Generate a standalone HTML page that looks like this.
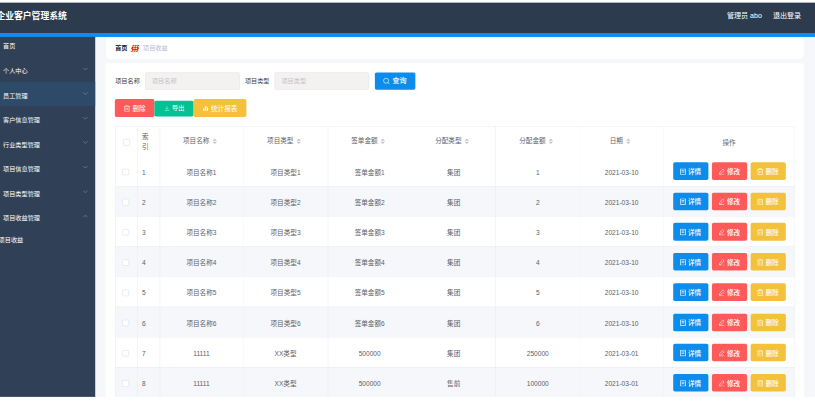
<!DOCTYPE html>
<html lang="zh-CN"><head><meta charset="utf-8"><title>企业客户管理系统</title><style>
html,body{margin:0;padding:0;background:#fff;}
body{width:815px;height:401px;overflow:hidden;position:relative;font-family:"Liberation Sans", "Noto Sans CJK SC", sans-serif;}
#w{position:absolute;left:0;top:0;width:1886.36px;height:931.82px;transform:scale(0.44);transform-origin:0 0;overflow:hidden;}
.b{position:absolute;}
.t{position:absolute;white-space:nowrap;}
.car{display:inline-block;position:relative;width:24px;height:14px;margin-left:0;vertical-align:-2px;}
.car i{position:absolute;left:7px;width:0;height:0;border:5px solid transparent;}
.car .up{top:-4px;border-bottom-color:#c0c4cc;}
.car .dn{top:8px;border-top-color:#c0c4cc;}
</style></head><body><div id="w">
<div class="b " style="left:0.00px;top:6.25px;width:1886.36px;height:68.75px;background:#2c3b4d;"></div>
<div class="b " style="left:0.00px;top:75.00px;width:1886.36px;height:9.66px;background:#0d8def;"></div>
<div class="t " style="left:-8.18px;top:23.05px;font-size:20px;line-height:28.00px;color:#fff;font-weight:700;">企业客户管理系统</div>
<div class="t " style="left:1652.27px;top:25.85px;font-size:16px;line-height:22.40px;color:#fff;font-weight:400;">管理员 abo</div>
<div class="t " style="left:1756.82px;top:25.85px;font-size:16px;line-height:22.40px;color:#fff;font-weight:400;">退出登录</div>
<div class="b " style="left:0.00px;top:84.32px;width:216.82px;height:847.50px;background:#304057;"></div>
<div class="b " style="left:0.00px;top:186.14px;width:216.82px;height:55.23px;background:#2d4a69;"></div>
<div class="t " style="left:6.82px;top:95.65px;font-size:14px;line-height:19.60px;color:#fff;font-weight:400;">首页</div>
<div class="t " style="left:6.82px;top:152.93px;font-size:14px;line-height:19.60px;color:#fff;font-weight:400;">个人中心</div>
<svg class="b" style="left:187.73px;top:153.32px;width:12px;height:7px" viewBox="0 0 12 7"><path d="M1 1 L6 6 L11 1" fill="none" stroke="#8a96a8" stroke-width="1.3"/></svg>
<div class="t " style="left:6.82px;top:209.06px;font-size:14px;line-height:19.60px;color:#fff;font-weight:400;">员工管理</div>
<svg class="b" style="left:187.73px;top:209.00px;width:12px;height:7px" viewBox="0 0 12 7"><path d="M1 1 L6 6 L11 1" fill="none" stroke="#8a96a8" stroke-width="1.3"/></svg>
<div class="t " style="left:6.82px;top:262.93px;font-size:14px;line-height:19.60px;color:#fff;font-weight:400;">客户信息管理</div>
<svg class="b" style="left:187.73px;top:265.14px;width:12px;height:7px" viewBox="0 0 12 7"><path d="M1 1 L6 6 L11 1" fill="none" stroke="#8a96a8" stroke-width="1.3"/></svg>
<div class="t " style="left:6.82px;top:318.61px;font-size:14px;line-height:19.60px;color:#fff;font-weight:400;">行业类型管理</div>
<svg class="b" style="left:187.73px;top:320.36px;width:12px;height:7px" viewBox="0 0 12 7"><path d="M1 1 L6 6 L11 1" fill="none" stroke="#8a96a8" stroke-width="1.3"/></svg>
<div class="t " style="left:6.82px;top:374.06px;font-size:14px;line-height:19.60px;color:#fff;font-weight:400;">项目信息管理</div>
<svg class="b" style="left:187.73px;top:376.05px;width:12px;height:7px" viewBox="0 0 12 7"><path d="M1 1 L6 6 L11 1" fill="none" stroke="#8a96a8" stroke-width="1.3"/></svg>
<div class="t " style="left:6.82px;top:431.56px;font-size:14px;line-height:19.60px;color:#fff;font-weight:400;">项目类型管理</div>
<svg class="b" style="left:187.73px;top:431.95px;width:12px;height:7px" viewBox="0 0 12 7"><path d="M1 1 L6 6 L11 1" fill="none" stroke="#8a96a8" stroke-width="1.3"/></svg>
<div class="t " style="left:6.82px;top:487.25px;font-size:14px;line-height:19.60px;color:#fff;font-weight:400;">项目收益管理</div>
<svg class="b" style="left:187.73px;top:487.86px;width:12px;height:7px" viewBox="0 0 12 7"><path d="M1 6 L6 1 L11 6" fill="none" stroke="#8a96a8" stroke-width="1.3"/></svg>
<div class="t " style="left:-3.18px;top:535.65px;font-size:14px;line-height:19.60px;color:#fff;font-weight:400;">项目收益</div>
<div class="b " style="left:216.82px;top:84.09px;width:1669.55px;height:827.27px;background:#f5f7fa;"></div>
<div class="b " style="left:240.91px;top:84.32px;width:1585.68px;height:49.77px;background:#fff;border-radius:10px;"></div>
<div class="t " style="left:261.82px;top:99.97px;font-size:14px;line-height:19.60px;color:#222;font-weight:700;">首页</div>
<div class="t " style="left:297.73px;top:99.27px;font-size:15px;line-height:21.00px;color:#f00;font-weight:700;font-style:italic;font-family:'DejaVu Sans',sans-serif;">∰</div>
<div class="t " style="left:325.00px;top:99.97px;font-size:14px;line-height:19.60px;color:#b4bccc;font-weight:400;">项目收益</div>
<div class="b " style="left:240.23px;top:144.09px;width:1586.36px;height:787.73px;background:#fff;"></div>
<div class="t " style="left:261.82px;top:174.06px;font-size:14px;line-height:19.60px;color:#444;font-weight:400;">项目名称</div>
<div class="b " style="left:329.77px;top:164.32px;width:215.45px;height:39.55px;background:#f4f1f1;border:1px solid #dcdfe6;border-radius:4px;box-sizing:border-box;"></div>
<div class="t " style="left:345.23px;top:174.06px;font-size:14px;line-height:19.60px;color:#c0c4cc;font-weight:400;">项目名称</div>
<div class="t " style="left:556.59px;top:174.06px;font-size:14px;line-height:19.60px;color:#444;font-weight:400;">项目类型</div>
<div class="b " style="left:624.09px;top:164.32px;width:215.23px;height:39.55px;background:#f4f1f1;border:1px solid #dcdfe6;border-radius:4px;box-sizing:border-box;"></div>
<div class="t " style="left:639.55px;top:174.06px;font-size:14px;line-height:19.60px;color:#c0c4cc;font-weight:400;">项目类型</div>
<div class="b " style="left:851.59px;top:165.23px;width:92.05px;height:38.64px;background:#0d8cec;border-radius:4px;"></div>
<svg class="b" style="left:870.45px;top:175.91px;width:16.36px;height:16.36px" viewBox="0 0 16 16"><circle cx="7.3" cy="7.3" r="5.6" fill="none" stroke="#fff" stroke-width="1.3"/><path d="M11.4 11.4 L14.6 14.6" stroke="#fff" stroke-width="1.3" stroke-linecap="round"/></svg>
<div class="t " style="left:892.05px;top:173.35px;font-size:16px;line-height:22.40px;color:#fff;font-weight:500;">查询</div>
<div class="b " style="left:261.36px;top:225.00px;width:89.32px;height:40.91px;background:#ff5a5a;border-radius:4px;"></div>
<div class="b " style="left:350.91px;top:229.09px;width:89.09px;height:35.45px;background:#00c292;border-radius:4px;"></div>
<div class="b " style="left:440.23px;top:225.00px;width:120.00px;height:40.91px;background:#f4c13c;border-radius:4px;"></div>
<svg class="b" style="left:280.68px;top:239.09px;width:15.00px;height:15.00px;opacity:1.0" viewBox="0 0 16 16"><path d="M0.8 3.4 H15.2 M5.2 3.2 V0.9 H10.8 V3.2 M2.6 3.6 V15.1 H13.4 V3.6 M6.1 6.4 V12 M9.9 6.4 V12" fill="none" stroke="#fff" stroke-width="1.35"/></svg>
<div class="t " style="left:301.14px;top:237.00px;font-size:15px;line-height:21.00px;color:#fff;font-weight:400;">删除</div>
<svg class="b" style="left:374.09px;top:241.14px;width:10.91px;height:10.91px;opacity:0.85" viewBox="0 0 16 16"><path d="M8 0.8 V10.4 M3.6 6.4 L8 10.8 L12.4 6.4 M1 11.2 V15 H15 V11.2" fill="none" stroke="#fff" stroke-width="1.5"/></svg>
<div class="t " style="left:391.14px;top:237.25px;font-size:14px;line-height:19.60px;color:#fff;font-weight:400;">导出</div>
<svg class="b" style="left:461.36px;top:239.77px;width:12.73px;height:12.73px;opacity:1.0" viewBox="0 0 16 16"><rect x="0.8" y="7.2" width="3.6" height="8" fill="#fff"/><rect x="6.2" y="1" width="3.6" height="14.2" fill="#fff"/><rect x="11.6" y="4.6" width="3.6" height="10.6" fill="#fff"/></svg>
<div class="t " style="left:479.55px;top:237.00px;font-size:15px;line-height:21.00px;color:#fff;font-weight:400;">统计报表</div>
<div class="b " style="left:262.05px;top:422.50px;width:1544.09px;height:68.64px;background:#f5f7fa;"></div>
<div class="b " style="left:262.05px;top:559.77px;width:1544.09px;height:68.64px;background:#f5f7fa;"></div>
<div class="b " style="left:262.05px;top:697.05px;width:1544.09px;height:68.64px;background:#f5f7fa;"></div>
<div class="b " style="left:262.05px;top:834.32px;width:1544.09px;height:68.64px;background:#f5f7fa;"></div>
<div class="b" style="left:262.05px;top:286.82px;width:1544.09px;height:1px;background:#e4e8f0;opacity:1.0"></div>
<div class="b" style="left:262.05px;top:422.50px;width:1544.09px;height:1px;background:#e4e8f0;opacity:0.8"></div>
<div class="b" style="left:262.05px;top:491.14px;width:1544.09px;height:1px;background:#e4e8f0;opacity:0.8"></div>
<div class="b" style="left:262.05px;top:559.77px;width:1544.09px;height:1px;background:#e4e8f0;opacity:0.8"></div>
<div class="b" style="left:262.05px;top:628.41px;width:1544.09px;height:1px;background:#e4e8f0;opacity:0.8"></div>
<div class="b" style="left:262.05px;top:697.05px;width:1544.09px;height:1px;background:#e4e8f0;opacity:0.8"></div>
<div class="b" style="left:262.05px;top:765.68px;width:1544.09px;height:1px;background:#e4e8f0;opacity:0.8"></div>
<div class="b" style="left:262.05px;top:834.32px;width:1544.09px;height:1px;background:#e4e8f0;opacity:0.8"></div>
<div class="b" style="left:262.05px;top:902.95px;width:1544.09px;height:1px;background:#e4e8f0;opacity:0.8"></div>
<div class="b" style="left:262.05px;top:286.82px;width:1px;height:616.14px;background:#e4e8f0;opacity:1.0"></div>
<div class="b" style="left:1806.14px;top:286.82px;width:1px;height:616.14px;background:#e4e8f0;opacity:1.0"></div>
<div class="b" style="left:312.27px;top:286.82px;width:1px;height:616.14px;background:#e4e8f0;opacity:0.9"></div>
<div class="b" style="left:362.50px;top:286.82px;width:1px;height:616.14px;background:#e4e8f0;opacity:0.9"></div>
<div class="b" style="left:553.18px;top:286.82px;width:1px;height:616.14px;background:#e4e8f0;opacity:0.5"></div>
<div class="b" style="left:744.77px;top:286.82px;width:1px;height:616.14px;background:#e4e8f0;opacity:0.9"></div>
<div class="b" style="left:1126.36px;top:286.82px;width:1px;height:616.14px;background:#e4e8f0;opacity:1.0"></div>
<div class="b" style="left:1317.95px;top:286.82px;width:1px;height:616.14px;background:#e4e8f0;opacity:0.35"></div>
<div class="b" style="left:1507.50px;top:286.82px;width:1px;height:616.14px;background:#e4e8f0;opacity:0.55"></div>
<div class="b " style="left:280.34px;top:316.48px;width:14.32px;height:14.32px;border:1.6px solid #d3d7de;border-radius:2px;box-sizing:border-box;background:#fff;"></div>
<div class="t " style="left:322.50px;top:300.18px;font-size:15px;line-height:21.00px;color:#5e626a;font-weight:400;">索</div>
<div class="t " style="left:322.50px;top:322.91px;font-size:15px;line-height:21.00px;color:#5e626a;font-weight:400;">引</div>
<div class="t " style="left:457.84px;transform:translateX(-50%);top:310.18px;font-size:15px;line-height:21.00px;color:#5e626a;font-weight:400;white-space:nowrap;">项目名称<span class="car"><i class="up"></i><i class="dn"></i></span></div>
<div class="t " style="left:648.98px;transform:translateX(-50%);top:310.18px;font-size:15px;line-height:21.00px;color:#5e626a;font-weight:400;white-space:nowrap;">项目类型<span class="car"><i class="up"></i><i class="dn"></i></span></div>
<div class="t " style="left:840.23px;transform:translateX(-50%);top:310.18px;font-size:15px;line-height:21.00px;color:#5e626a;font-weight:400;white-space:nowrap;">签单金额<span class="car"><i class="up"></i><i class="dn"></i></span></div>
<div class="t " style="left:1031.02px;transform:translateX(-50%);top:310.18px;font-size:15px;line-height:21.00px;color:#5e626a;font-weight:400;white-space:nowrap;">分配类型<span class="car"><i class="up"></i><i class="dn"></i></span></div>
<div class="t " style="left:1222.16px;transform:translateX(-50%);top:310.18px;font-size:15px;line-height:21.00px;color:#5e626a;font-weight:400;white-space:nowrap;">分配金额<span class="car"><i class="up"></i><i class="dn"></i></span></div>
<div class="t " style="left:1412.73px;transform:translateX(-50%);top:310.18px;font-size:15px;line-height:21.00px;color:#5e626a;font-weight:400;white-space:nowrap;">日期<span class="car"><i class="up"></i><i class="dn"></i></span></div>
<div class="t " style="left:1656.82px;transform:translateX(-50%);top:313.82px;font-size:15px;line-height:21.00px;color:#5e626a;font-weight:400;">操作</div>
<div class="b " style="left:278.30px;top:383.75px;width:14.32px;height:14.32px;border:1.6px solid #d3d7de;border-radius:2px;box-sizing:border-box;background:#fff;"></div>
<div class="t " style="left:322.50px;top:380.86px;font-size:15px;line-height:21.00px;color:#606266;font-weight:400;">1</div>
<div class="t " style="left:457.84px;transform:translateX(-50%);top:380.86px;font-size:15px;line-height:21.00px;color:#606266;font-weight:400;white-space:nowrap;">项目名称1</div>
<div class="t " style="left:648.98px;transform:translateX(-50%);top:380.86px;font-size:15px;line-height:21.00px;color:#606266;font-weight:400;white-space:nowrap;">项目类型1</div>
<div class="t " style="left:840.23px;transform:translateX(-50%);top:380.86px;font-size:15px;line-height:21.00px;color:#606266;font-weight:400;white-space:nowrap;">签单金额1</div>
<div class="t " style="left:1031.02px;transform:translateX(-50%);top:380.86px;font-size:15px;line-height:21.00px;color:#606266;font-weight:400;white-space:nowrap;">集团</div>
<div class="t " style="left:1222.16px;transform:translateX(-50%);top:380.86px;font-size:15px;line-height:21.00px;color:#606266;font-weight:400;white-space:nowrap;">1</div>
<div class="t " style="left:1412.73px;transform:translateX(-50%);top:380.86px;font-size:15px;line-height:21.00px;color:#606266;font-weight:400;white-space:nowrap;">2021-03-10</div>
<div class="b " style="left:1530.00px;top:368.86px;width:79.55px;height:40.23px;background:#0d8cec;border-radius:4px;"></div>
<div class="b " style="left:1618.41px;top:368.86px;width:79.32px;height:40.23px;background:#ff5a5a;border-radius:4px;"></div>
<div class="b " style="left:1706.36px;top:368.86px;width:79.77px;height:40.23px;background:#f4c13c;border-radius:4px;"></div>
<svg class="b" style="left:1545.00px;top:382.61px;width:14.55px;height:14.55px;opacity:1.0" viewBox="0 0 16 16"><path d="M1.6 0.9 H14.4 V15.1 H1.6 Z M4.4 5.2 H11.6 M4.4 8.8 H11.6" fill="none" stroke="#fff" stroke-width="1.8"/></svg>
<div class="t " style="left:1563.64px;top:379.61px;font-size:15px;line-height:21.00px;color:#fff;font-weight:500;">详情</div>
<svg class="b" style="left:1632.73px;top:382.61px;width:14.55px;height:14.55px;opacity:1.0" viewBox="0 0 16 16"><path d="M10.6 1.2 L14.2 4.8 L6 13 L2 14 L3 10 Z M1 15.4 H15" fill="none" stroke="#fff" stroke-width="1.35"/></svg>
<div class="t " style="left:1652.27px;top:379.61px;font-size:15px;line-height:21.00px;color:#fff;font-weight:500;">修改</div>
<svg class="b" style="left:1719.77px;top:382.16px;width:15.45px;height:15.45px;opacity:1.0" viewBox="0 0 16 16"><path d="M0.8 3.4 H15.2 M5.2 3.2 V0.9 H10.8 V3.2 M2.6 3.6 V15.1 H13.4 V3.6 M6.1 6.4 V12 M9.9 6.4 V12" fill="none" stroke="#fff" stroke-width="1.35"/></svg>
<div class="t " style="left:1740.00px;top:379.61px;font-size:15px;line-height:21.00px;color:#fff;font-weight:500;">删除</div>
<div class="b " style="left:278.30px;top:452.39px;width:14.32px;height:14.32px;border:1.6px solid #d3d7de;border-radius:2px;box-sizing:border-box;background:#fff;"></div>
<div class="t " style="left:322.50px;top:449.50px;font-size:15px;line-height:21.00px;color:#606266;font-weight:400;">2</div>
<div class="t " style="left:457.84px;transform:translateX(-50%);top:449.50px;font-size:15px;line-height:21.00px;color:#606266;font-weight:400;white-space:nowrap;">项目名称2</div>
<div class="t " style="left:648.98px;transform:translateX(-50%);top:449.50px;font-size:15px;line-height:21.00px;color:#606266;font-weight:400;white-space:nowrap;">项目类型2</div>
<div class="t " style="left:840.23px;transform:translateX(-50%);top:449.50px;font-size:15px;line-height:21.00px;color:#606266;font-weight:400;white-space:nowrap;">签单金额2</div>
<div class="t " style="left:1031.02px;transform:translateX(-50%);top:449.50px;font-size:15px;line-height:21.00px;color:#606266;font-weight:400;white-space:nowrap;">集团</div>
<div class="t " style="left:1222.16px;transform:translateX(-50%);top:449.50px;font-size:15px;line-height:21.00px;color:#606266;font-weight:400;white-space:nowrap;">2</div>
<div class="t " style="left:1412.73px;transform:translateX(-50%);top:449.50px;font-size:15px;line-height:21.00px;color:#606266;font-weight:400;white-space:nowrap;">2021-03-10</div>
<div class="b " style="left:1530.00px;top:437.59px;width:79.55px;height:40.23px;background:#0d8cec;border-radius:4px;"></div>
<div class="b " style="left:1618.41px;top:437.59px;width:79.32px;height:40.23px;background:#ff5a5a;border-radius:4px;"></div>
<div class="b " style="left:1706.36px;top:437.59px;width:79.77px;height:40.23px;background:#f4c13c;border-radius:4px;"></div>
<svg class="b" style="left:1545.00px;top:451.34px;width:14.55px;height:14.55px;opacity:1.0" viewBox="0 0 16 16"><path d="M1.6 0.9 H14.4 V15.1 H1.6 Z M4.4 5.2 H11.6 M4.4 8.8 H11.6" fill="none" stroke="#fff" stroke-width="1.8"/></svg>
<div class="t " style="left:1563.64px;top:448.34px;font-size:15px;line-height:21.00px;color:#fff;font-weight:500;">详情</div>
<svg class="b" style="left:1632.73px;top:451.34px;width:14.55px;height:14.55px;opacity:1.0" viewBox="0 0 16 16"><path d="M10.6 1.2 L14.2 4.8 L6 13 L2 14 L3 10 Z M1 15.4 H15" fill="none" stroke="#fff" stroke-width="1.35"/></svg>
<div class="t " style="left:1652.27px;top:448.34px;font-size:15px;line-height:21.00px;color:#fff;font-weight:500;">修改</div>
<svg class="b" style="left:1719.77px;top:450.89px;width:15.45px;height:15.45px;opacity:1.0" viewBox="0 0 16 16"><path d="M0.8 3.4 H15.2 M5.2 3.2 V0.9 H10.8 V3.2 M2.6 3.6 V15.1 H13.4 V3.6 M6.1 6.4 V12 M9.9 6.4 V12" fill="none" stroke="#fff" stroke-width="1.35"/></svg>
<div class="t " style="left:1740.00px;top:448.34px;font-size:15px;line-height:21.00px;color:#fff;font-weight:500;">删除</div>
<div class="b " style="left:278.30px;top:521.02px;width:14.32px;height:14.32px;border:1.6px solid #d3d7de;border-radius:2px;box-sizing:border-box;background:#fff;"></div>
<div class="t " style="left:322.50px;top:518.14px;font-size:15px;line-height:21.00px;color:#606266;font-weight:400;">3</div>
<div class="t " style="left:457.84px;transform:translateX(-50%);top:518.14px;font-size:15px;line-height:21.00px;color:#606266;font-weight:400;white-space:nowrap;">项目名称3</div>
<div class="t " style="left:648.98px;transform:translateX(-50%);top:518.14px;font-size:15px;line-height:21.00px;color:#606266;font-weight:400;white-space:nowrap;">项目类型3</div>
<div class="t " style="left:840.23px;transform:translateX(-50%);top:518.14px;font-size:15px;line-height:21.00px;color:#606266;font-weight:400;white-space:nowrap;">签单金额3</div>
<div class="t " style="left:1031.02px;transform:translateX(-50%);top:518.14px;font-size:15px;line-height:21.00px;color:#606266;font-weight:400;white-space:nowrap;">集团</div>
<div class="t " style="left:1222.16px;transform:translateX(-50%);top:518.14px;font-size:15px;line-height:21.00px;color:#606266;font-weight:400;white-space:nowrap;">3</div>
<div class="t " style="left:1412.73px;transform:translateX(-50%);top:518.14px;font-size:15px;line-height:21.00px;color:#606266;font-weight:400;white-space:nowrap;">2021-03-10</div>
<div class="b " style="left:1530.00px;top:506.32px;width:79.55px;height:40.23px;background:#0d8cec;border-radius:4px;"></div>
<div class="b " style="left:1618.41px;top:506.32px;width:79.32px;height:40.23px;background:#ff5a5a;border-radius:4px;"></div>
<div class="b " style="left:1706.36px;top:506.32px;width:79.77px;height:40.23px;background:#f4c13c;border-radius:4px;"></div>
<svg class="b" style="left:1545.00px;top:520.07px;width:14.55px;height:14.55px;opacity:1.0" viewBox="0 0 16 16"><path d="M1.6 0.9 H14.4 V15.1 H1.6 Z M4.4 5.2 H11.6 M4.4 8.8 H11.6" fill="none" stroke="#fff" stroke-width="1.8"/></svg>
<div class="t " style="left:1563.64px;top:517.07px;font-size:15px;line-height:21.00px;color:#fff;font-weight:500;">详情</div>
<svg class="b" style="left:1632.73px;top:520.07px;width:14.55px;height:14.55px;opacity:1.0" viewBox="0 0 16 16"><path d="M10.6 1.2 L14.2 4.8 L6 13 L2 14 L3 10 Z M1 15.4 H15" fill="none" stroke="#fff" stroke-width="1.35"/></svg>
<div class="t " style="left:1652.27px;top:517.07px;font-size:15px;line-height:21.00px;color:#fff;font-weight:500;">修改</div>
<svg class="b" style="left:1719.77px;top:519.61px;width:15.45px;height:15.45px;opacity:1.0" viewBox="0 0 16 16"><path d="M0.8 3.4 H15.2 M5.2 3.2 V0.9 H10.8 V3.2 M2.6 3.6 V15.1 H13.4 V3.6 M6.1 6.4 V12 M9.9 6.4 V12" fill="none" stroke="#fff" stroke-width="1.35"/></svg>
<div class="t " style="left:1740.00px;top:517.07px;font-size:15px;line-height:21.00px;color:#fff;font-weight:500;">删除</div>
<div class="b " style="left:278.30px;top:589.66px;width:14.32px;height:14.32px;border:1.6px solid #d3d7de;border-radius:2px;box-sizing:border-box;background:#fff;"></div>
<div class="t " style="left:322.50px;top:586.77px;font-size:15px;line-height:21.00px;color:#606266;font-weight:400;">4</div>
<div class="t " style="left:457.84px;transform:translateX(-50%);top:586.77px;font-size:15px;line-height:21.00px;color:#606266;font-weight:400;white-space:nowrap;">项目名称4</div>
<div class="t " style="left:648.98px;transform:translateX(-50%);top:586.77px;font-size:15px;line-height:21.00px;color:#606266;font-weight:400;white-space:nowrap;">项目类型4</div>
<div class="t " style="left:840.23px;transform:translateX(-50%);top:586.77px;font-size:15px;line-height:21.00px;color:#606266;font-weight:400;white-space:nowrap;">签单金额4</div>
<div class="t " style="left:1031.02px;transform:translateX(-50%);top:586.77px;font-size:15px;line-height:21.00px;color:#606266;font-weight:400;white-space:nowrap;">集团</div>
<div class="t " style="left:1222.16px;transform:translateX(-50%);top:586.77px;font-size:15px;line-height:21.00px;color:#606266;font-weight:400;white-space:nowrap;">4</div>
<div class="t " style="left:1412.73px;transform:translateX(-50%);top:586.77px;font-size:15px;line-height:21.00px;color:#606266;font-weight:400;white-space:nowrap;">2021-03-10</div>
<div class="b " style="left:1530.00px;top:575.05px;width:79.55px;height:40.23px;background:#0d8cec;border-radius:4px;"></div>
<div class="b " style="left:1618.41px;top:575.05px;width:79.32px;height:40.23px;background:#ff5a5a;border-radius:4px;"></div>
<div class="b " style="left:1706.36px;top:575.05px;width:79.77px;height:40.23px;background:#f4c13c;border-radius:4px;"></div>
<svg class="b" style="left:1545.00px;top:588.80px;width:14.55px;height:14.55px;opacity:1.0" viewBox="0 0 16 16"><path d="M1.6 0.9 H14.4 V15.1 H1.6 Z M4.4 5.2 H11.6 M4.4 8.8 H11.6" fill="none" stroke="#fff" stroke-width="1.8"/></svg>
<div class="t " style="left:1563.64px;top:585.80px;font-size:15px;line-height:21.00px;color:#fff;font-weight:500;">详情</div>
<svg class="b" style="left:1632.73px;top:588.80px;width:14.55px;height:14.55px;opacity:1.0" viewBox="0 0 16 16"><path d="M10.6 1.2 L14.2 4.8 L6 13 L2 14 L3 10 Z M1 15.4 H15" fill="none" stroke="#fff" stroke-width="1.35"/></svg>
<div class="t " style="left:1652.27px;top:585.80px;font-size:15px;line-height:21.00px;color:#fff;font-weight:500;">修改</div>
<svg class="b" style="left:1719.77px;top:588.34px;width:15.45px;height:15.45px;opacity:1.0" viewBox="0 0 16 16"><path d="M0.8 3.4 H15.2 M5.2 3.2 V0.9 H10.8 V3.2 M2.6 3.6 V15.1 H13.4 V3.6 M6.1 6.4 V12 M9.9 6.4 V12" fill="none" stroke="#fff" stroke-width="1.35"/></svg>
<div class="t " style="left:1740.00px;top:585.80px;font-size:15px;line-height:21.00px;color:#fff;font-weight:500;">删除</div>
<div class="b " style="left:278.30px;top:658.30px;width:14.32px;height:14.32px;border:1.6px solid #d3d7de;border-radius:2px;box-sizing:border-box;background:#fff;"></div>
<div class="t " style="left:322.50px;top:655.41px;font-size:15px;line-height:21.00px;color:#606266;font-weight:400;">5</div>
<div class="t " style="left:457.84px;transform:translateX(-50%);top:655.41px;font-size:15px;line-height:21.00px;color:#606266;font-weight:400;white-space:nowrap;">项目名称5</div>
<div class="t " style="left:648.98px;transform:translateX(-50%);top:655.41px;font-size:15px;line-height:21.00px;color:#606266;font-weight:400;white-space:nowrap;">项目类型5</div>
<div class="t " style="left:840.23px;transform:translateX(-50%);top:655.41px;font-size:15px;line-height:21.00px;color:#606266;font-weight:400;white-space:nowrap;">签单金额5</div>
<div class="t " style="left:1031.02px;transform:translateX(-50%);top:655.41px;font-size:15px;line-height:21.00px;color:#606266;font-weight:400;white-space:nowrap;">集团</div>
<div class="t " style="left:1222.16px;transform:translateX(-50%);top:655.41px;font-size:15px;line-height:21.00px;color:#606266;font-weight:400;white-space:nowrap;">5</div>
<div class="t " style="left:1412.73px;transform:translateX(-50%);top:655.41px;font-size:15px;line-height:21.00px;color:#606266;font-weight:400;white-space:nowrap;">2021-03-10</div>
<div class="b " style="left:1530.00px;top:643.77px;width:79.55px;height:40.23px;background:#0d8cec;border-radius:4px;"></div>
<div class="b " style="left:1618.41px;top:643.77px;width:79.32px;height:40.23px;background:#ff5a5a;border-radius:4px;"></div>
<div class="b " style="left:1706.36px;top:643.77px;width:79.77px;height:40.23px;background:#f4c13c;border-radius:4px;"></div>
<svg class="b" style="left:1545.00px;top:657.52px;width:14.55px;height:14.55px;opacity:1.0" viewBox="0 0 16 16"><path d="M1.6 0.9 H14.4 V15.1 H1.6 Z M4.4 5.2 H11.6 M4.4 8.8 H11.6" fill="none" stroke="#fff" stroke-width="1.8"/></svg>
<div class="t " style="left:1563.64px;top:654.52px;font-size:15px;line-height:21.00px;color:#fff;font-weight:500;">详情</div>
<svg class="b" style="left:1632.73px;top:657.52px;width:14.55px;height:14.55px;opacity:1.0" viewBox="0 0 16 16"><path d="M10.6 1.2 L14.2 4.8 L6 13 L2 14 L3 10 Z M1 15.4 H15" fill="none" stroke="#fff" stroke-width="1.35"/></svg>
<div class="t " style="left:1652.27px;top:654.52px;font-size:15px;line-height:21.00px;color:#fff;font-weight:500;">修改</div>
<svg class="b" style="left:1719.77px;top:657.07px;width:15.45px;height:15.45px;opacity:1.0" viewBox="0 0 16 16"><path d="M0.8 3.4 H15.2 M5.2 3.2 V0.9 H10.8 V3.2 M2.6 3.6 V15.1 H13.4 V3.6 M6.1 6.4 V12 M9.9 6.4 V12" fill="none" stroke="#fff" stroke-width="1.35"/></svg>
<div class="t " style="left:1740.00px;top:654.52px;font-size:15px;line-height:21.00px;color:#fff;font-weight:500;">删除</div>
<div class="b " style="left:278.30px;top:726.93px;width:14.32px;height:14.32px;border:1.6px solid #d3d7de;border-radius:2px;box-sizing:border-box;background:#fff;"></div>
<div class="t " style="left:322.50px;top:724.05px;font-size:15px;line-height:21.00px;color:#606266;font-weight:400;">6</div>
<div class="t " style="left:457.84px;transform:translateX(-50%);top:724.05px;font-size:15px;line-height:21.00px;color:#606266;font-weight:400;white-space:nowrap;">项目名称6</div>
<div class="t " style="left:648.98px;transform:translateX(-50%);top:724.05px;font-size:15px;line-height:21.00px;color:#606266;font-weight:400;white-space:nowrap;">项目类型6</div>
<div class="t " style="left:840.23px;transform:translateX(-50%);top:724.05px;font-size:15px;line-height:21.00px;color:#606266;font-weight:400;white-space:nowrap;">签单金额6</div>
<div class="t " style="left:1031.02px;transform:translateX(-50%);top:724.05px;font-size:15px;line-height:21.00px;color:#606266;font-weight:400;white-space:nowrap;">集团</div>
<div class="t " style="left:1222.16px;transform:translateX(-50%);top:724.05px;font-size:15px;line-height:21.00px;color:#606266;font-weight:400;white-space:nowrap;">6</div>
<div class="t " style="left:1412.73px;transform:translateX(-50%);top:724.05px;font-size:15px;line-height:21.00px;color:#606266;font-weight:400;white-space:nowrap;">2021-03-10</div>
<div class="b " style="left:1530.00px;top:712.50px;width:79.55px;height:40.23px;background:#0d8cec;border-radius:4px;"></div>
<div class="b " style="left:1618.41px;top:712.50px;width:79.32px;height:40.23px;background:#ff5a5a;border-radius:4px;"></div>
<div class="b " style="left:1706.36px;top:712.50px;width:79.77px;height:40.23px;background:#f4c13c;border-radius:4px;"></div>
<svg class="b" style="left:1545.00px;top:726.25px;width:14.55px;height:14.55px;opacity:1.0" viewBox="0 0 16 16"><path d="M1.6 0.9 H14.4 V15.1 H1.6 Z M4.4 5.2 H11.6 M4.4 8.8 H11.6" fill="none" stroke="#fff" stroke-width="1.8"/></svg>
<div class="t " style="left:1563.64px;top:723.25px;font-size:15px;line-height:21.00px;color:#fff;font-weight:500;">详情</div>
<svg class="b" style="left:1632.73px;top:726.25px;width:14.55px;height:14.55px;opacity:1.0" viewBox="0 0 16 16"><path d="M10.6 1.2 L14.2 4.8 L6 13 L2 14 L3 10 Z M1 15.4 H15" fill="none" stroke="#fff" stroke-width="1.35"/></svg>
<div class="t " style="left:1652.27px;top:723.25px;font-size:15px;line-height:21.00px;color:#fff;font-weight:500;">修改</div>
<svg class="b" style="left:1719.77px;top:725.80px;width:15.45px;height:15.45px;opacity:1.0" viewBox="0 0 16 16"><path d="M0.8 3.4 H15.2 M5.2 3.2 V0.9 H10.8 V3.2 M2.6 3.6 V15.1 H13.4 V3.6 M6.1 6.4 V12 M9.9 6.4 V12" fill="none" stroke="#fff" stroke-width="1.35"/></svg>
<div class="t " style="left:1740.00px;top:723.25px;font-size:15px;line-height:21.00px;color:#fff;font-weight:500;">删除</div>
<div class="b " style="left:278.30px;top:795.57px;width:14.32px;height:14.32px;border:1.6px solid #d3d7de;border-radius:2px;box-sizing:border-box;background:#fff;"></div>
<div class="t " style="left:322.50px;top:792.68px;font-size:15px;line-height:21.00px;color:#606266;font-weight:400;">7</div>
<div class="t " style="left:457.84px;transform:translateX(-50%);top:792.68px;font-size:15px;line-height:21.00px;color:#606266;font-weight:400;white-space:nowrap;">11111</div>
<div class="t " style="left:648.98px;transform:translateX(-50%);top:792.68px;font-size:15px;line-height:21.00px;color:#606266;font-weight:400;white-space:nowrap;">XX类型</div>
<div class="t " style="left:840.23px;transform:translateX(-50%);top:792.68px;font-size:15px;line-height:21.00px;color:#606266;font-weight:400;white-space:nowrap;">500000</div>
<div class="t " style="left:1031.02px;transform:translateX(-50%);top:792.68px;font-size:15px;line-height:21.00px;color:#606266;font-weight:400;white-space:nowrap;">集团</div>
<div class="t " style="left:1222.16px;transform:translateX(-50%);top:792.68px;font-size:15px;line-height:21.00px;color:#606266;font-weight:400;white-space:nowrap;">250000</div>
<div class="t " style="left:1412.73px;transform:translateX(-50%);top:792.68px;font-size:15px;line-height:21.00px;color:#606266;font-weight:400;white-space:nowrap;">2021-03-01</div>
<div class="b " style="left:1530.00px;top:781.23px;width:79.55px;height:40.23px;background:#0d8cec;border-radius:4px;"></div>
<div class="b " style="left:1618.41px;top:781.23px;width:79.32px;height:40.23px;background:#ff5a5a;border-radius:4px;"></div>
<div class="b " style="left:1706.36px;top:781.23px;width:79.77px;height:40.23px;background:#f4c13c;border-radius:4px;"></div>
<svg class="b" style="left:1545.00px;top:794.98px;width:14.55px;height:14.55px;opacity:1.0" viewBox="0 0 16 16"><path d="M1.6 0.9 H14.4 V15.1 H1.6 Z M4.4 5.2 H11.6 M4.4 8.8 H11.6" fill="none" stroke="#fff" stroke-width="1.8"/></svg>
<div class="t " style="left:1563.64px;top:791.98px;font-size:15px;line-height:21.00px;color:#fff;font-weight:500;">详情</div>
<svg class="b" style="left:1632.73px;top:794.98px;width:14.55px;height:14.55px;opacity:1.0" viewBox="0 0 16 16"><path d="M10.6 1.2 L14.2 4.8 L6 13 L2 14 L3 10 Z M1 15.4 H15" fill="none" stroke="#fff" stroke-width="1.35"/></svg>
<div class="t " style="left:1652.27px;top:791.98px;font-size:15px;line-height:21.00px;color:#fff;font-weight:500;">修改</div>
<svg class="b" style="left:1719.77px;top:794.52px;width:15.45px;height:15.45px;opacity:1.0" viewBox="0 0 16 16"><path d="M0.8 3.4 H15.2 M5.2 3.2 V0.9 H10.8 V3.2 M2.6 3.6 V15.1 H13.4 V3.6 M6.1 6.4 V12 M9.9 6.4 V12" fill="none" stroke="#fff" stroke-width="1.35"/></svg>
<div class="t " style="left:1740.00px;top:791.98px;font-size:15px;line-height:21.00px;color:#fff;font-weight:500;">删除</div>
<div class="b " style="left:278.30px;top:864.20px;width:14.32px;height:14.32px;border:1.6px solid #d3d7de;border-radius:2px;box-sizing:border-box;background:#fff;"></div>
<div class="t " style="left:322.50px;top:861.32px;font-size:15px;line-height:21.00px;color:#606266;font-weight:400;">8</div>
<div class="t " style="left:457.84px;transform:translateX(-50%);top:861.32px;font-size:15px;line-height:21.00px;color:#606266;font-weight:400;white-space:nowrap;">11111</div>
<div class="t " style="left:648.98px;transform:translateX(-50%);top:861.32px;font-size:15px;line-height:21.00px;color:#606266;font-weight:400;white-space:nowrap;">XX类型</div>
<div class="t " style="left:840.23px;transform:translateX(-50%);top:861.32px;font-size:15px;line-height:21.00px;color:#606266;font-weight:400;white-space:nowrap;">500000</div>
<div class="t " style="left:1031.02px;transform:translateX(-50%);top:861.32px;font-size:15px;line-height:21.00px;color:#606266;font-weight:400;white-space:nowrap;">售前</div>
<div class="t " style="left:1222.16px;transform:translateX(-50%);top:861.32px;font-size:15px;line-height:21.00px;color:#606266;font-weight:400;white-space:nowrap;">100000</div>
<div class="t " style="left:1412.73px;transform:translateX(-50%);top:861.32px;font-size:15px;line-height:21.00px;color:#606266;font-weight:400;white-space:nowrap;">2021-03-01</div>
<div class="b " style="left:1530.00px;top:849.95px;width:79.55px;height:40.23px;background:#0d8cec;border-radius:4px;"></div>
<div class="b " style="left:1618.41px;top:849.95px;width:79.32px;height:40.23px;background:#ff5a5a;border-radius:4px;"></div>
<div class="b " style="left:1706.36px;top:849.95px;width:79.77px;height:40.23px;background:#f4c13c;border-radius:4px;"></div>
<svg class="b" style="left:1545.00px;top:863.70px;width:14.55px;height:14.55px;opacity:1.0" viewBox="0 0 16 16"><path d="M1.6 0.9 H14.4 V15.1 H1.6 Z M4.4 5.2 H11.6 M4.4 8.8 H11.6" fill="none" stroke="#fff" stroke-width="1.8"/></svg>
<div class="t " style="left:1563.64px;top:860.70px;font-size:15px;line-height:21.00px;color:#fff;font-weight:500;">详情</div>
<svg class="b" style="left:1632.73px;top:863.70px;width:14.55px;height:14.55px;opacity:1.0" viewBox="0 0 16 16"><path d="M10.6 1.2 L14.2 4.8 L6 13 L2 14 L3 10 Z M1 15.4 H15" fill="none" stroke="#fff" stroke-width="1.35"/></svg>
<div class="t " style="left:1652.27px;top:860.70px;font-size:15px;line-height:21.00px;color:#fff;font-weight:500;">修改</div>
<svg class="b" style="left:1719.77px;top:863.25px;width:15.45px;height:15.45px;opacity:1.0" viewBox="0 0 16 16"><path d="M0.8 3.4 H15.2 M5.2 3.2 V0.9 H10.8 V3.2 M2.6 3.6 V15.1 H13.4 V3.6 M6.1 6.4 V12 M9.9 6.4 V12" fill="none" stroke="#fff" stroke-width="1.35"/></svg>
<div class="t " style="left:1740.00px;top:860.70px;font-size:15px;line-height:21.00px;color:#fff;font-weight:500;">删除</div>
<div class="b " style="left:0.00px;top:901.82px;width:1886.36px;height:30.00px;background:#fff;"></div>
</div></body></html>
